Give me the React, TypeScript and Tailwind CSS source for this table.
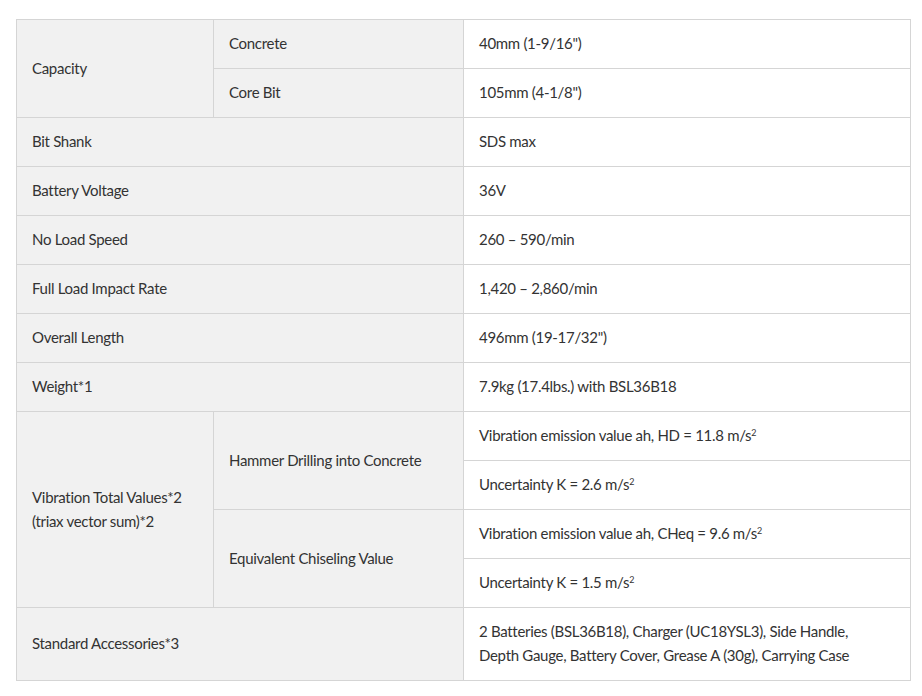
type Row = {
  label: React.ReactNode;
  sub?: { name: string; values: React.ReactNode[] }[];
  value?: React.ReactNode;
};

const sq = <sup className="text-[9px] leading-none -top-[5px]">2</sup>;

const ROWS: Row[] = [
  {
    label: 'Capacity',
    sub: [
      { name: 'Concrete', values: ['40mm (1-9/16")'] },
      { name: 'Core Bit', values: ['105mm (4-1/8")'] },
    ],
  },
  { label: 'Bit Shank', value: 'SDS max' },
  { label: 'Battery Voltage', value: '36V' },
  { label: 'No Load Speed', value: '260 – 590/min' },
  { label: 'Full Load Impact Rate', value: '1,420 – 2,860/min' },
  { label: 'Overall Length', value: '496mm (19-17/32")' },
  { label: 'Weight*1', value: '7.9kg (17.4lbs.) with BSL36B18' },
  {
    label: (
      <>
        Vibration Total Values*2
        <br />
        (triax vector sum)*2
      </>
    ),
    sub: [
      {
        name: 'Hammer Drilling into Concrete',
        values: [
          <>Vibration emission value ah, HD = 11.8 m/s{sq}</>,
          <>Uncertainty K = 2.6 m/s{sq}</>,
        ],
      },
      {
        name: 'Equivalent Chiseling Value',
        values: [
          <>Vibration emission value ah, CHeq = 9.6 m/s{sq}</>,
          <>Uncertainty K = 1.5 m/s{sq}</>,
        ],
      },
    ],
  },
  {
    label: 'Standard Accessories*3',
    value: (
      <>
        2 Batteries (BSL36B18), Charger (UC18YSL3), Side Handle,
        <br />
        Depth Gauge, Battery Cover, Grease A (30g), Carrying Case
      </>
    ),
  },
];

const th = 'bg-[#f1f1f1] border border-[#d5d5d5] pl-[15px] pr-4 pt-[11px] pb-[13px] align-middle text-left font-normal';
const td = 'bg-white border border-[#d5d5d5] pl-[15px] pr-4 pt-[11px] pb-[13px] align-middle';

function SpecRows({ row }: { row: Row }) {
  if (!row.sub) {
    return (
      <tr>
        <th colSpan={2} className={th}>{row.label}</th>
        <td className={td}>{row.value}</td>
      </tr>
    );
  }
  const total = row.sub.reduce((n, s) => n + s.values.length, 0);
  const out: React.ReactNode[] = [];
  row.sub.forEach((s, si) => {
    s.values.forEach((v, vi) => {
      out.push(
        <tr key={`${si}-${vi}`}>
          {si === 0 && vi === 0 && (
            <th rowSpan={total} className={th}>{row.label}</th>
          )}
          {vi === 0 && (
            <th rowSpan={s.values.length} className={th}>{s.name}</th>
          )}
          <td className={td}>{v}</td>
        </tr>
      );
    });
  });
  return <>{out}</>;
}

export default function App() {
  return (
    <div className="bg-white min-h-screen pt-[19px] pl-4 pr-3 font-['Lato','Liberation_Sans',sans-serif] text-[15px] tracking-[-0.3px] leading-6 text-[#333]">
      <table className="w-[894px] table-fixed border-collapse">
        <colgroup>
          <col className="w-[197px]" />
          <col className="w-[250px]" />
          <col className="w-[447px]" />
        </colgroup>
        <tbody>
          {ROWS.map((row, i) => (
            <SpecRows key={i} row={row} />
          ))}
        </tbody>
      </table>
    </div>
  );
}
